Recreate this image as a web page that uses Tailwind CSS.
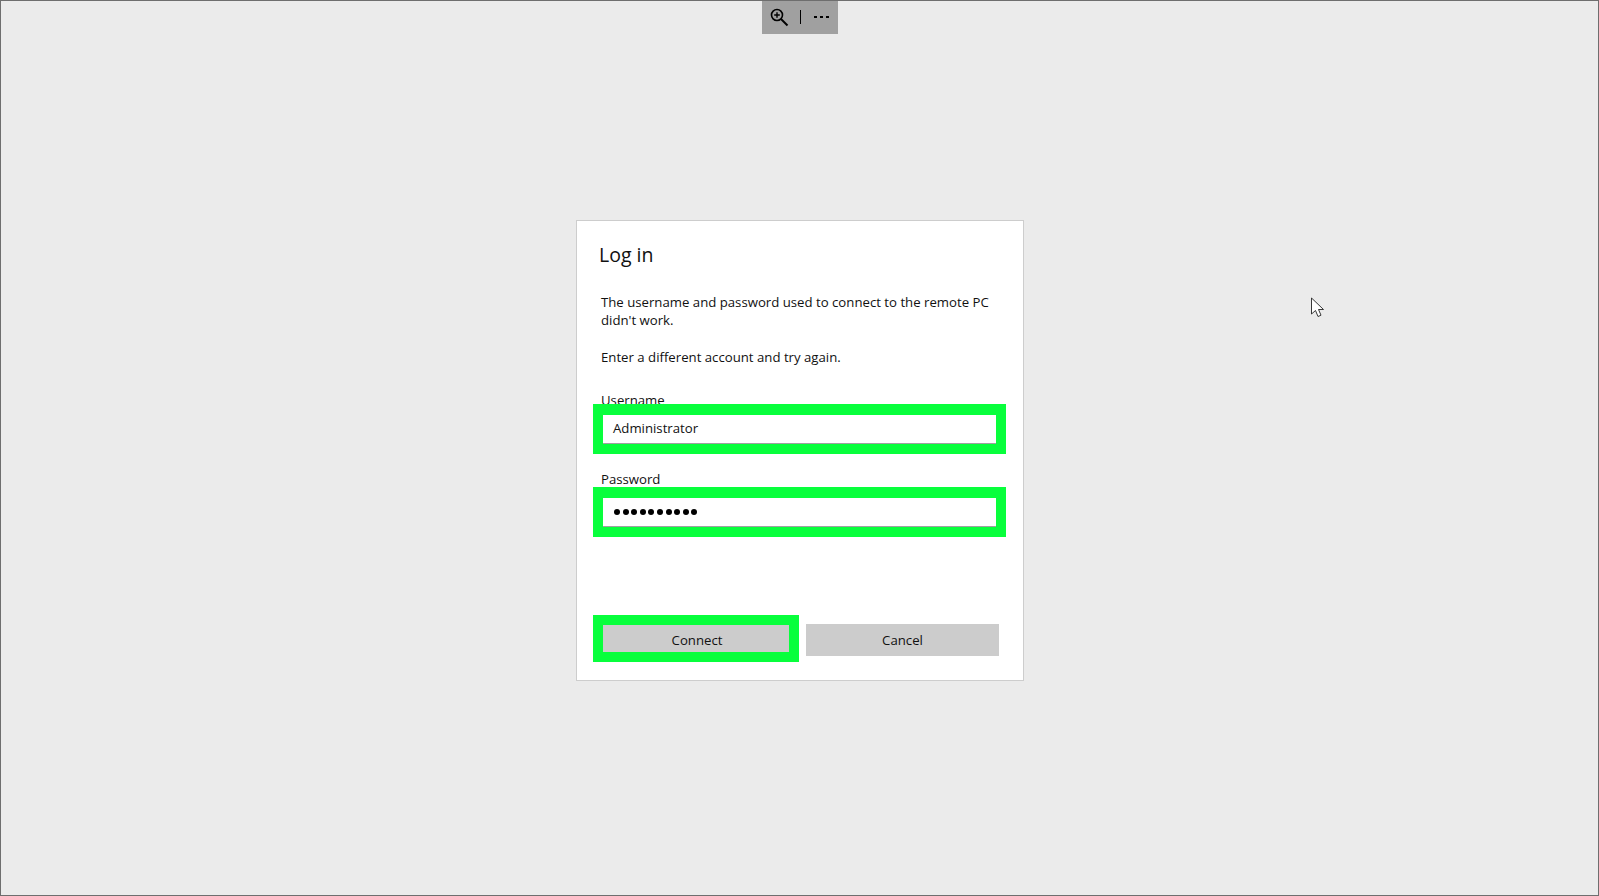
<!DOCTYPE html>
<html lang="en">
<head>
  <meta charset="UTF-8">
  <title>Log in</title>
  <script src="https://cdn.jsdelivr.net/npm/@tailwindcss/browser@4"></script>
</head>
<body class="bg-[#ebebeb] font-['Open_Sans','Noto_Sans',sans-serif] text-[#111]">
  <div class="relative h-[896px] w-[1599px] overflow-hidden border border-[#6e6e6e] pl-[575px] pt-[219px]">

    <!-- toolbar -->
    <div class="absolute left-[761px] top-0 flex h-[33px] w-[76px] items-center bg-[#a0a0a0] pb-[2px]">
      <svg class="ml-[7px]" width="20" height="20" viewBox="0 0 20 20" fill="none" stroke="#000">
        <circle cx="8" cy="8" r="5.5" stroke-width="1.6"/>
        <path d="M12 12l6.500 6.500" stroke-width="2"/>
        <path d="M5.200 8h5.600M8 5.200v5.600" stroke-width="1.400"/>
      </svg>
      <div class="ml-[11px] h-[14px] w-px bg-black"></div>
      <div class="ml-[13px] flex gap-[3px]">
        <span class="h-[2px] w-[3px] bg-black"></span>
        <span class="h-[2px] w-[3px] bg-black"></span>
        <span class="h-[2px] w-[3px] bg-black"></span>
      </div>
    </div>

    <!-- dialog -->
    <div class="h-[461px] w-[448px] border border-[#cdcdcd] bg-white pl-[16px]">
      <h1 class="ml-[6px] mt-[19px] h-[30px] text-[19.5px] leading-[30px]">Log in</h1>

      <div class="ml-[8px] mt-[23px] w-[405px] text-[13.2px] leading-[18px]">
        <p>The username and password used to connect to the remote PC didn't work.</p>
        <p class="mt-[19px]">Enter a different account and try again.</p>
      </div>

      <label class="ml-[8px] mt-[25px] block h-[18px] text-[13.2px] leading-[18px]">Username</label>
      <div class="relative -mt-[5px] h-[50px] w-[413px] border-[10px] border-t-[11px] border-[#08ff3c] bg-white">
        <div class="flex h-full items-center border-b border-[#a0a0a0] pl-[10px] text-[13.2px]">Administrator</div>
      </div>

      <label class="ml-[8px] mt-[16px] block h-[18px] text-[13.2px] leading-[18px]">Password</label>
      <div class="relative -mt-[1px] h-[50px] w-[413px] border-[10px] border-t-[11px] border-[#08ff3c] bg-white">
        <div class="flex h-full items-center gap-[2.6px] border-b border-[#a0a0a0] pl-[11px]">
          <span class="size-[6px] rounded-full bg-black"></span>
          <span class="size-[6px] rounded-full bg-black"></span>
          <span class="size-[6px] rounded-full bg-black"></span>
          <span class="size-[6px] rounded-full bg-black"></span>
          <span class="size-[6px] rounded-full bg-black"></span>
          <span class="size-[6px] rounded-full bg-black"></span>
          <span class="size-[6px] rounded-full bg-black"></span>
          <span class="size-[6px] rounded-full bg-black"></span>
          <span class="size-[6px] rounded-full bg-black"></span>
          <span class="size-[6px] rounded-full bg-black"></span>
        </div>
      </div>

      <div class="mt-[78px] flex items-start gap-[7px]">
        <div class="h-[47px] w-[206px] border-[10px] border-[#08ff3c] bg-[#cccccc]">
          <button class="mt-[5px] w-full pl-[2px] text-center text-[13.2px] leading-[20px]">Connect</button>
        </div>
        <button class="mt-[9px] h-[32px] w-[193px] bg-[#cccccc] pt-[2px] text-center text-[13.2px]">Cancel</button>
      </div>
    </div>

    <!-- mouse cursor -->
    <svg class="absolute left-[1309px] top-[296px]" width="16" height="22" viewBox="0 0 16 22">
      <path d="M1.500 1v16l4-3.500 2.500 6 3-1.300-2.500-5.700h5z" fill="#fff" stroke="#222" stroke-width="0.900" stroke-linejoin="round"/>
    </svg>
  </div>
</body>
</html>
